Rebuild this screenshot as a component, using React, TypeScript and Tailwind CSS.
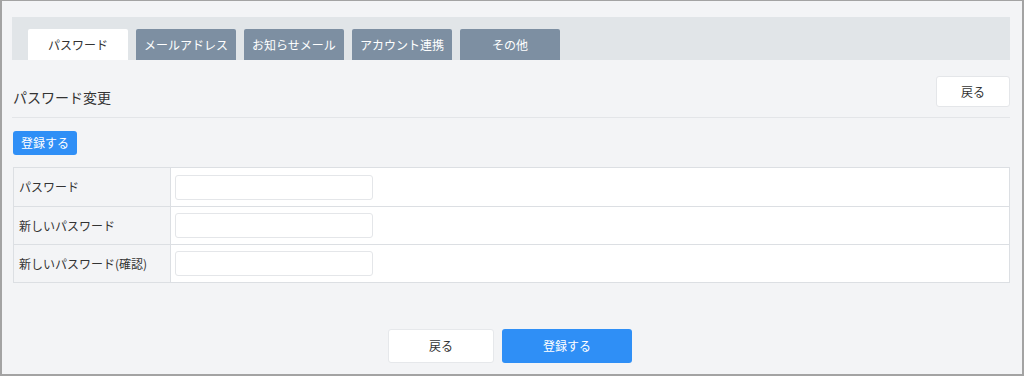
import { ReactElement } from 'react'

const tabs = ['パスワード', 'メールアドレス', 'お知らせメール', 'アカウント連携', 'その他']

const fields = ['パスワード', '新しいパスワード', '新しいパスワード(確認)']

export default function App(): ReactElement {
  return (
    <div
      className="h-[376px] w-[1024px] overflow-hidden border-t border-r-2 border-b-2 border-l-2 border-[#a3a3a3] bg-[#f3f4f6] text-[#333]"
      style={{ fontFamily: '"Noto Sans CJK JP", "Noto Sans", sans-serif' }}
    >
      <div className="pt-4 pr-[12px] pl-[10px]">
        {/* tabs */}
        <div className="flex h-[43px] items-end gap-2 bg-[#e1e5e8] pl-4">
          {tabs.map((tab, idx) => (
            <div
              key={tab}
              className={`flex h-[31px] w-[100px] items-center justify-center rounded-t-[2px] text-[12px] ${
                idx === 0 ? 'bg-white text-[#333]' : 'bg-[#7d8fa2] text-white'
              }`}
            >
              {tab}
            </div>
          ))}
        </div>

        {/* header */}
        <div className="flex h-[58px] items-start justify-between border-b border-[#e3e5e8] pl-[1px]">
          <div className="mt-[27px] text-[14px] leading-5">パスワード変更</div>
          <button className="mt-4 h-[31px] w-[74px] rounded-[3px] border border-[#e4e6e9] bg-white text-[12px] text-[#333]">
            戻る
          </button>
        </div>

        <div className="flex pt-[13px] pl-[1px]">
          <button className="h-[24px] w-[64px] rounded-[3px] bg-[#2f8ff6] text-[12px] text-white">登録する</button>
        </div>

        {/* form table */}
        <div className="mt-[12px] ml-[1px] border border-[#dcdfe3] bg-white">
          {fields.map((label, idx) => (
            <div key={label} className={`flex h-[38px] ${idx > 0 ? 'border-t border-[#dcdfe3]' : ''}`}>
              <div className="flex w-[157px] items-center border-r border-[#dcdfe3] bg-[#f3f4f6] pl-[5px] text-[12px]">
                {label}
              </div>
              <div className="flex items-center pl-1">
                <input className="h-[25px] w-[198px] rounded-[3px] border border-[#e4e6e9] bg-white px-2 text-[12px] outline-none" />
              </div>
            </div>
          ))}
        </div>

        {/* footer buttons */}
        <div className="mt-[46px] flex justify-center gap-2 pr-[2px]">
          <button className="h-[34px] w-[106px] rounded-[3px] border border-[#e6e8eb] bg-white text-[12px] text-[#333]">
            戻る
          </button>
          <button className="h-[34px] w-[130px] rounded-[3px] bg-[#2f8ff6] text-[12px] text-white">登録する</button>
        </div>
      </div>
    </div>
  )
}
